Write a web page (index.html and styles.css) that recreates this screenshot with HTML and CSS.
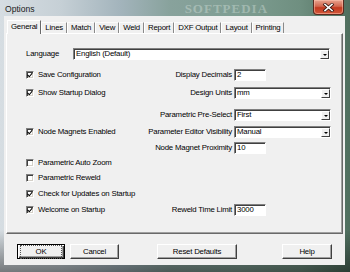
FILE: index.html
```html
<!DOCTYPE html>
<html>
<head>
<meta charset="utf-8">
<link rel="stylesheet" href="styles.css">
</head>
<body>
<div class="win">
  <div class="titlebar">
    <span class="title">Options</span>
    <span class="wm">SOFTPEDIA</span>
    <div class="close">
      <svg width="13" height="9" viewBox="0 0 13 9"><path d="M3 1.5 L10 7.5 M10 1.5 L3 7.5" stroke="#3a1a14" stroke-width="3.2" stroke-linecap="square"/><path d="M3 1.5 L10 7.5 M10 1.5 L3 7.5" stroke="#fff" stroke-width="1.6" stroke-linecap="square"/></svg>
    </div>
  </div>
  <div class="client">
    <div class="tabs">
      <div class="tab active">General</div>
      <div class="tab">Lines</div>
      <div class="tab">Match</div>
      <div class="tab">View</div>
      <div class="tab">Weld</div>
      <div class="tab">Report</div>
      <div class="tab">DXF Output</div>
      <div class="tab">Layout</div>
      <div class="tab">Printing</div>
    </div>
    <div class="panel">
      <div class="row lang">
        <span class="lbl-lang">Language</span>
        <div class="combo grow"><span class="val">English (Default)</span><span class="dd"></span></div>
      </div>
      <div class="row r-a">
        <label class="chk"><span class="box on"></span>Save Configuration</label>
        <div class="right"><span class="lbl">Display Decimals</span><div class="field"><div class="edit">2</div></div></div>
      </div>
      <div class="row r-b">
        <label class="chk"><span class="box on"></span>Show Startup Dialog</label>
        <div class="right"><span class="lbl">Design Units</span><div class="field"><div class="combo"><span class="val">mm</span><span class="dd"></span></div></div></div>
      </div>
      <div class="row r-c">
        <div class="right"><span class="lbl">Parametric Pre-Select</span><div class="field"><div class="combo"><span class="val">First</span><span class="dd"></span></div></div></div>
      </div>
      <div class="row r-d">
        <label class="chk"><span class="box on"></span>Node Magnets Enabled</label>
        <div class="right"><span class="lbl">Parameter Editor Visibility</span><div class="field"><div class="combo"><span class="val">Manual</span><span class="dd"></span></div></div></div>
      </div>
      <div class="row r-e">
        <div class="right"><span class="lbl">Node Magnet Proximity</span><div class="field"><div class="edit">10</div></div></div>
      </div>
      <div class="row r-f">
        <label class="chk"><span class="box"></span>Parametric Auto Zoom</label>
      </div>
      <div class="row r-g">
        <label class="chk"><span class="box"></span>Parametric Reweld</label>
      </div>
      <div class="row r-h">
        <label class="chk"><span class="box on"></span>Check for Updates on Startup</label>
      </div>
      <div class="row r-i">
        <label class="chk"><span class="box on"></span>Welcome on Startup</label>
        <div class="right"><span class="lbl">Reweld Time Limit</span><div class="field"><div class="edit">3000</div></div></div>
      </div>
    </div>
    <div class="buttons">
      <div class="btn default"><span>OK</span></div>
      <div class="btn cancel"><span>Cancel</span></div>
      <div class="btn reset"><span>Reset Defaults</span></div>
      <div class="btn help"><span>Help</span></div>
    </div>
  </div>
</div>
</body>
</html>
```

FILE: styles.css
```css
html, body {
  margin: 0;
  padding: 0;
}
body {
  width: 350px;
  height: 272px;
  overflow: hidden;
  background: #5d7a70;
  font-family: "Liberation Sans", Arial, sans-serif;
  font-size: 7.8px;
  letter-spacing: -0.2px;
  color: #000;
}
.win {
  width: 350px;
  height: 272px;
  display: flex;
  flex-direction: column;
  background:
    linear-gradient(to bottom, rgba(255,255,255,0) 0, rgba(255,255,255,0) 230px, rgba(0,0,0,0.45) 272px),
    linear-gradient(to right, #d6dde2 0, #c6d0d6 60px, #a3b4bc 120px, #88a29c 170px, #7e9d92 240px, #6f8f80 300px, #4f6e5e 350px);
}
.titlebar {
  height: 16px;
  display: flex;
  align-items: center;
  padding-left: 5px;
  flex: none;
}
.title {
  font-family: "Liberation Sans", Arial, sans-serif;
  font-size: 8.6px;
  letter-spacing: 0;
  color: #1b1b1b;
  margin-top: 1px;
}
.wm {
  font-family: "Liberation Serif", serif;
  font-weight: bold;
  font-size: 13px;
  letter-spacing: 1px;
  color: rgba(230, 240, 235, 0.35);
  margin-left: 150px;
  margin-top: 2px;
}
.close {
  margin-left: auto;
  margin-right: 6px;
  align-self: flex-start;
  width: 29px;
  height: 14px;
  border: 1px solid #5a2a20;
  border-top: none;
  border-radius: 0 0 4px 4px;
  background: linear-gradient(to bottom, #e8a38f 0, #d2674f 45%, #c2391f 55%, #d3573a 100%);
  display: flex;
  align-items: center;
  justify-content: center;
  box-shadow: inset 0 0 0 1px rgba(255,200,180,0.5);
}
.client {
  flex: none;
  height: 249px;
  margin: 0 5px 0 4px;
  background: #f0f0f0;
  display: flex;
  flex-direction: column;
}
.tabs {
  display: flex;
  margin: 4px 0 0 3px;
  height: 13px;
  align-items: flex-end;
  position: relative;
  z-index: 1;
}
.tab {
  height: 10px;
  line-height: 10px;
  padding: 0 3px;
  border-left: 1px solid #fff;
  border-right: 1px solid #8a8a8a;
  border-top: 1px solid #fbfbfb;
  white-space: nowrap;
}
.tab.active {
  height: 13px;
  line-height: 12px;
  padding: 0 3px 0 3px;
  margin-bottom: -1px;
  background: #f0f0f0;
  border-right-color: #696969;
  border-top-color: #fff;
  position: relative;
}
.panel {
  margin: 0 2px 0 2px;
  height: 201px;
  box-sizing: border-box;
  border: 1px solid;
  border-color: #fff #696969 #696969 #fff;
  box-shadow: inset -1px -1px 0 #a0a0a0;
  padding: 12px 11px 0 19px;
  display: flex;
  flex-direction: column;
}
.row {
  display: flex;
  align-items: center;
  height: 15px;
  flex: none;
}
.r-a { margin-top: 6px; }
.r-b { margin-top: 3px; }
.r-c { margin-top: 7px; }
.r-d { margin-top: 2px; }
.r-e { margin-top: 1px; }
.r-h { margin-top: 1px; }
.r-i { margin-top: 1px; }
.lbl-lang {
  width: 47px;
  flex: none;
}
.grow {
  flex: 1;
  margin-right: 1px;
}
.chk {
  display: flex;
  align-items: center;
  white-space: nowrap;
}
.box {
  width: 6px;
  height: 6px;
  border: 1px solid;
  border-color: #808080 #fff #fff #808080;
  box-shadow: inset 1px 1px 0 #404040, inset -1px -1px 0 #d4d0c8;
  background: #fff;
  margin-right: 4px;
  position: relative;
  flex: none;
}
.box.on::after {
  content: "";
  position: absolute;
  left: 1px;
  top: 0px;
  width: 2px;
  height: 4px;
  border: solid #000;
  border-width: 0 1.5px 1.5px 0;
  transform: rotate(40deg);
  transform-origin: 60% 60%;
}
.right {
  margin-left: auto;
  display: flex;
  align-items: center;
}
.lbl {
  white-space: nowrap;
  margin-right: 2px;
}
.field {
  width: 97px;
  display: flex;
}
.edit {
  width: 32px;
  height: 12px;
  box-sizing: border-box;
  background: #fff;
  border: 1px solid;
  border-color: #808080 #fff #fff #808080;
  box-shadow: inset 1px 1px 0 #404040;
  padding: 0 2px;
  line-height: 10px;
}
.combo {
  flex: 1;
  height: 12px;
  box-sizing: border-box;
  background: #fff;
  border: 1px solid;
  border-color: #808080 #fff #fff #808080;
  box-shadow: inset 1px 1px 0 #404040;
  display: flex;
  align-items: stretch;
}
.val {
  flex: 1;
  padding-left: 2px;
  line-height: 10px;
  white-space: nowrap;
}
.dd {
  width: 9px;
  margin: 1px 0 0 0;
  box-sizing: border-box;
  background: #f0f0f0;
  border: 1px solid;
  border-color: #fff #404040 #404040 #fff;
  position: relative;
}
.dd::after {
  content: "";
  position: absolute;
  left: 2px;
  top: 3px;
  border-left: 2px solid transparent;
  border-right: 2px solid transparent;
  border-top: 2px solid #000;
}
.buttons {
  display: flex;
  align-items: center;
  padding: 0 13px 0 13px;
  margin-top: 10px;
}
.btn {
  height: 15px;
  box-sizing: border-box;
  background: #f0f0f0;
  border: 1px solid;
  border-color: #fff #404040 #404040 #fff;
  box-shadow: inset -1px -1px 0 #a0a0a0;
  display: flex;
  align-items: center;
  justify-content: center;
  line-height: 10px;
}
.btn.default {
  width: 48px;
  border: 1px solid #000;
  box-shadow: inset 1px 1px 0 #fff, inset -1px -1px 0 #404040, inset -2px -2px 0 #a0a0a0;
}
.btn.default span {
  padding: 0 14px;
  outline: 1px dotted #555;
  outline-offset: 1px;
}
.cancel { width: 49px; margin-left: 5px; }
.reset { width: 80px; margin-left: 38px; }
.help { width: 50px; margin-left: auto; }
```
